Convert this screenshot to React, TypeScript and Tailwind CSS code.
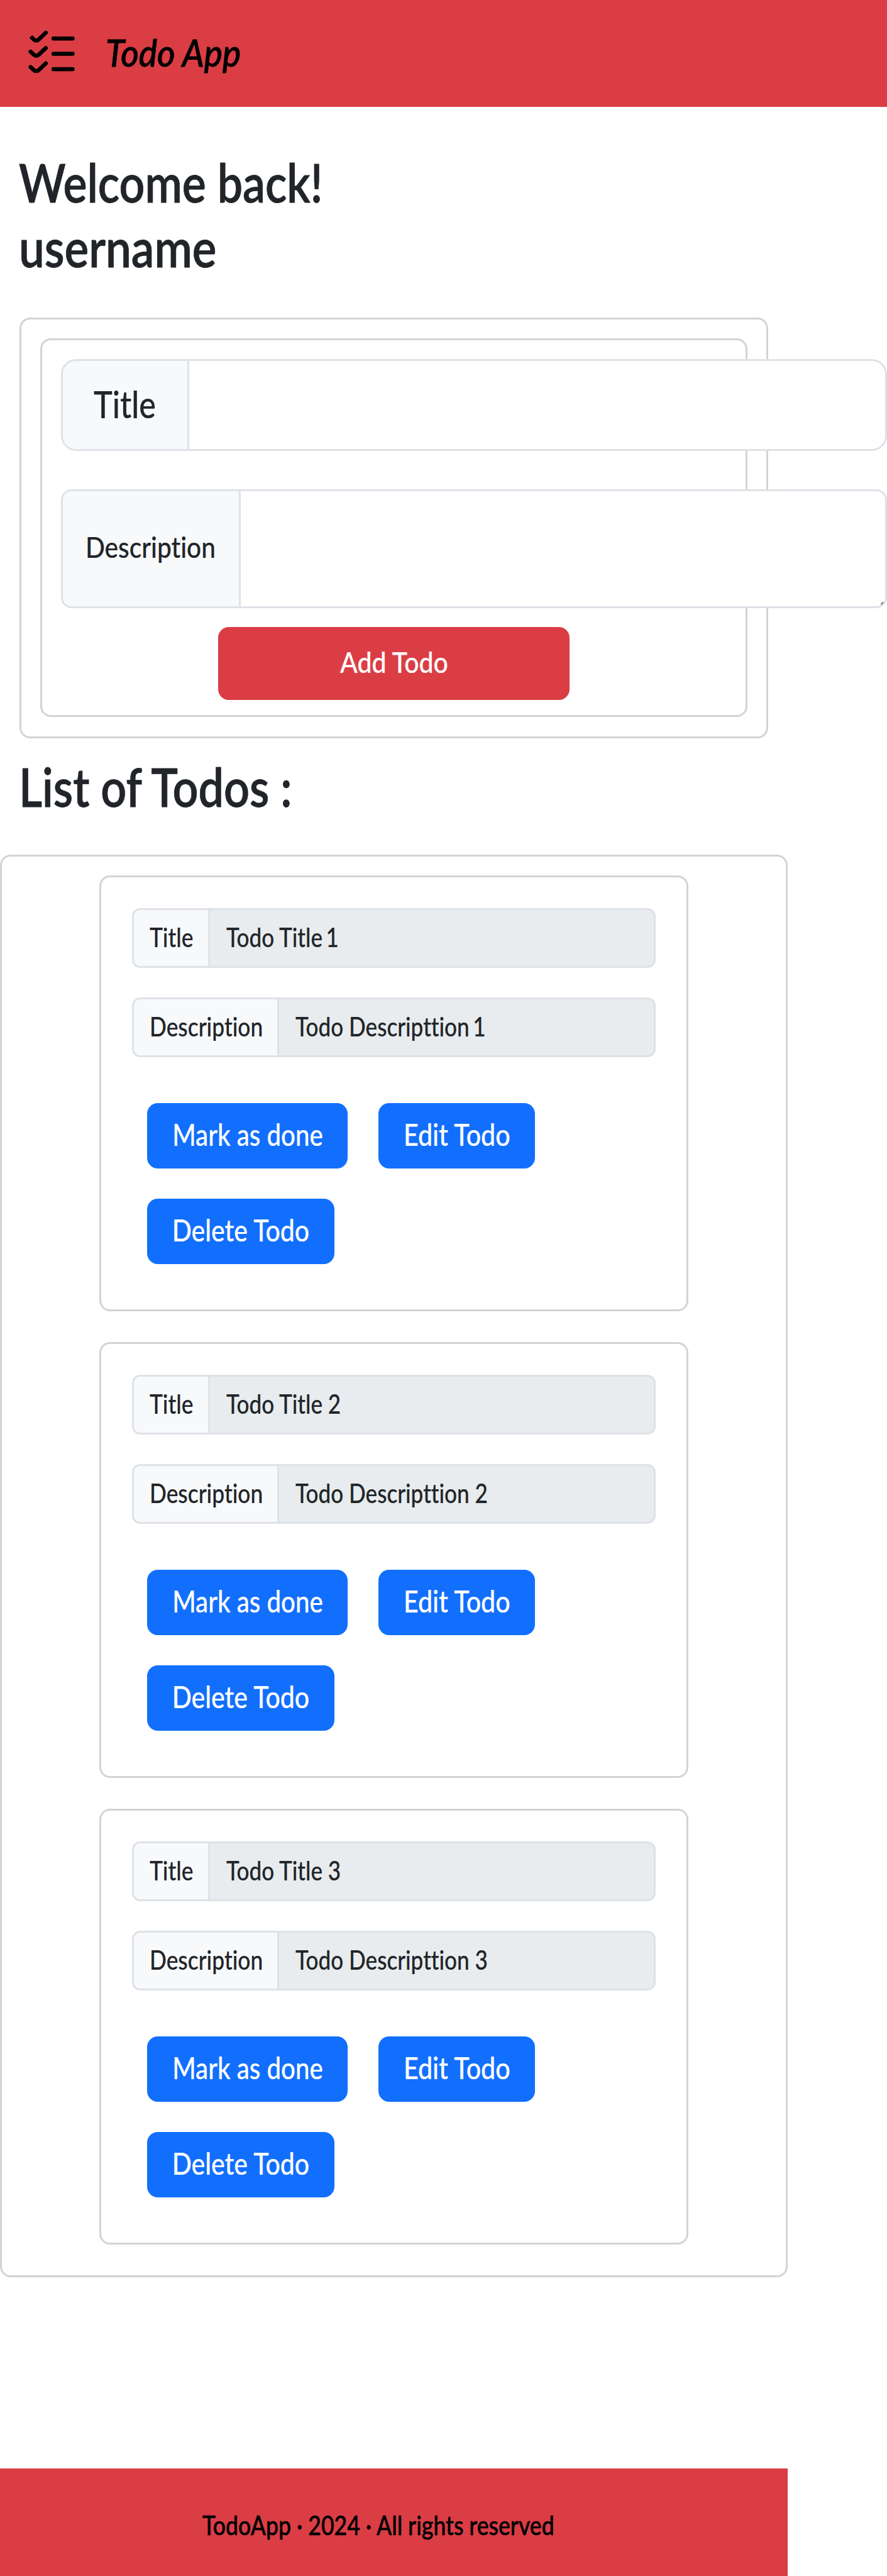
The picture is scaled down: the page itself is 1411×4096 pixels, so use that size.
import type { ReactNode } from 'react';

const todos = [1, 2, 3];

function ChecklistIcon() {
  return (
    <svg className="h-[67px] w-[74px] shrink-0" viewBox="52 56 85 77" fill="none" stroke="#000" strokeWidth="7.4" strokeLinecap="round">
      <path d="M59.5 69.5 L62.2 72 Q66.6 75.6 70.9 72 L84 59.5" />
      <path d="M56 65.5 L59 68.5" transform="translate(0.6 0.9)" strokeLinecap="butt" />
      <path d="M56.2 94 L62.2 99.8 Q66.6 103.4 70.9 99.8 L84 87.5" />
      <path d="M56.2 122.2 L62.2 127.9 Q66.6 131.4 70.9 127.9 L84 115.5" />
      <path d="M98 70 H133 M98 98 H133 M98 126 H133" />
    </svg>
  );
}

function Field({ label, value, labelClass }: { label: string; value: ReactNode; labelClass: string }) {
  return (
    <div className="flex h-[95px] overflow-hidden rounded-[13px] border-[3px] border-[#dee2e7] bg-[#e8ecee] text-[42.3px]">
      <div className={`flex shrink-0 items-center border-r-[3px] border-[#dee2e7] bg-[#f8f9fb] pb-[4px] pl-[25px] ${labelClass}`}>
        <span className="origin-left scale-x-[.836]">{label}</span>
      </div>
      <div className="flex items-center pb-[4px] pl-[26px]">
        <span className="origin-left scale-x-[.83]">{value}</span>
      </div>
    </div>
  );
}

function Button({ children, className }: { children: ReactNode; className: string }) {
  return (
    <button className={`flex h-[104px] items-center justify-center rounded-[17px] bg-[#126ffd] pb-[5px] text-[48px] text-white ${className}`}>
      {children}
    </button>
  );
}

function TodoCard({ n }: { n: number }) {
  const num = n === 1 ? <span className="-ml-[4px]">1</span> : n;
  return (
    <article className="mx-auto h-[693px] w-[937px] rounded-[17px] border-[3px] border-[#d3d3d3] px-[49px] pt-[49px]">
      <Field label="Title" value={<>Todo Title {num}</>} labelClass="w-[121px]" />
      <div className="mt-[47px]">
        <Field label="Description" value={<>Todo Descripttion {num}</>} labelClass="w-[231px]" />
      </div>
      <div className="mt-[73px] flex flex-wrap gap-x-[49px] gap-y-12 pl-6">
        <Button className="w-[319px]"><span className="scale-x-[.838]">Mark as done</span></Button>
        <Button className="w-[249px]"><span className="scale-x-[.859]">Edit Todo</span></Button>
        <Button className="w-[298px]"><span className="scale-x-[.854]">Delete Todo</span></Button>
      </div>
    </article>
  );
}

export default function App() {
  return (
    <div className="h-[4096px] w-[1411px] overflow-hidden bg-white font-['Lato',sans-serif] font-medium whitespace-nowrap text-[#212529] [-webkit-text-stroke:0.2px_currentColor] [font-variant-ligatures:none]">
      <header className="flex h-[170px] items-center gap-[49px] bg-[#db3d45] pl-[45px] text-black">
        <div className="pb-[6px]"><ChecklistIcon /></div>
        <span className="origin-left scale-x-[.92] pb-[2px] text-[59.8px] leading-none italic [-webkit-text-stroke:0.9px_currentColor]">Todo App</span>
      </header>

      <h1 className="pt-[68px] pl-[30px] text-[84.4px] leading-[103px] font-semibold [-webkit-text-stroke:0.8px_currentColor]">
        <span className="block origin-left scale-x-[.848]">Welcome back!</span>
        <span className="block origin-left scale-x-[.862]">username</span>
      </h1>

      <section className="mt-[61px] ml-[31px] h-[669px] w-[1191px] rounded-[17px] border-[3px] border-[#d3d3d3] p-[30px]">
        <form className="h-[602px] rounded-[17px] border-[3px] border-[#d3d3d3] pt-[30px] pl-[30px]">
          <div className="relative flex h-[146px] w-[1314px] overflow-hidden rounded-[24px] border-[3px] border-[#dee2e7] bg-white text-[59.6px]">
            <div className="flex w-[201px] items-center border-r-[3px] border-[#dee2e7] bg-[#f8f9fb] pb-[2px] pl-[49px]">
              <span className="origin-left scale-x-[.845]">Title</span>
            </div>
          </div>
          <div className="relative mt-[61px] flex h-[189px] w-[1314px] overflow-hidden rounded-[17px] border-[3px] border-[#dee2e7] bg-white text-[46.3px]">
            <div className="flex w-[283px] items-center border-r-[3px] border-[#dee2e7] bg-[#f8f9fb] pb-[5px] pl-[36px]">
              <span className="origin-left scale-x-[.877]">Description</span>
            </div>
            <svg className="absolute right-[2px] bottom-[2px] size-[5px]" viewBox="0 0 5 5" stroke="#555" strokeWidth="2.2">
              <path d="M0.6 4.4 L4.4 0.6" />
            </svg>
          </div>
          <button type="button" className="mt-[30px] ml-[250px] flex h-[116px] w-[559px] items-center justify-center rounded-[17px] bg-[#db3d45] pb-[5px] text-[46.3px] text-white">
            <span className="scale-x-[.886]">Add Todo</span>
          </button>
        </form>
      </section>

      <h2 className="mt-[25px] pl-[30px] text-[84.8px] leading-[103px] font-semibold [-webkit-text-stroke:0.8px_currentColor]">
        <span className="block origin-left scale-x-[.847]">List of Todos :</span>
      </h2>

      <main className="mt-[57px] flex h-[2262px] w-[1253px] flex-col gap-[49px] rounded-[17px] border-[3px] border-[#d3d3d3] pt-[30px]">
        {todos.map((n) => <TodoCard key={n} n={n} />)}
      </main>

      <footer className="mt-[304px] flex h-[171px] w-[1253px] items-center bg-[#db3d45] pt-[9px] pl-[322px] text-[42px] text-black [-webkit-text-stroke:0.6px_currentColor]">
        <span className="origin-left scale-x-[.847]">TodoApp · 2024 · All rights reserved</span>
      </footer>
    </div>
  );
}
